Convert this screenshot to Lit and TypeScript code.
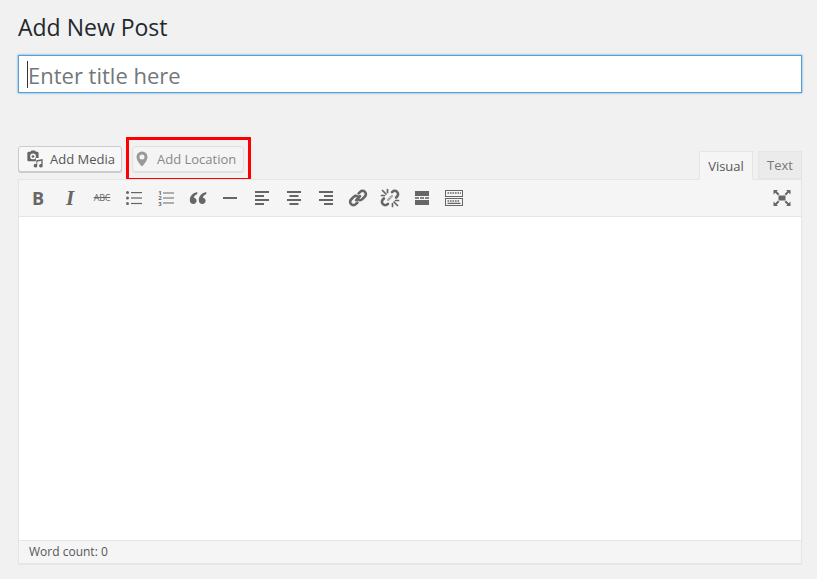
import { LitElement, html, css, svg } from "lit";
import { customElement } from "lit/decorators.js";

const ic = (body: unknown) => html`<svg class="ico" viewBox="0 0 20 20" width="20" height="20">${body}</svg>`;

const lines = (rows: [number, number, number][]) =>
  rows.map(([x, y, w]) => svg`<rect x=${x} y=${y} width=${w} height="2"></rect>`);

const linkBody = svg`<g fill="none" stroke="#666" stroke-width="2.6" stroke-linecap="round"><path d="M8.200 12.200 L12 8.200"></path><path d="M10.600 5.400 l1.600-1.600 a3.300 3.300 0 0 1 4.700 4.700 l-2.600 2.600 a3.300 3.300 0 0 1-4 .5"></path><path d="M9.400 14.600 l-1.600 1.600 a3.300 3.300 0 0 1-4.700-4.700 l2.600-2.600 a3.300 3.300 0 0 1 4-.5"></path></g>`;

const unlinkBody = svg`<g fill="none" stroke="#666" stroke-width="2.6" stroke-linecap="round"><path d="M12 4.200 l.4-.4 a3.300 3.300 0 0 1 4.700 4.700 l-1 1"></path><path d="M8 15.800 l-.4.4 a3.300 3.300 0 0 1-4.700-4.700 l1-1"></path></g><g stroke="#666" stroke-width="1.700" stroke-linecap="round"><path d="M2.500 2.500l3.500 3.500M7.500 1.500v3M1.500 7.500h3M17.500 17.500l-3.500-3.500M12.500 18.500v-3M18.500 12.500h-3"></path><path d="M8 12l4-4" stroke-width="2.400" stroke="#aaa"></path></g>`;

const icons = [
  html`<span class="glyph bold">B</span>`,
  html`<span class="glyph ital">I</span>`,
  html`<span class="glyph abc">ABC</span>`,
  ic(svg`<circle cx="3.500" cy="4.500" r="1.500"></circle><circle cx="3.500" cy="10" r="1.500"></circle><circle cx="3.500" cy="15.500" r="1.500"></circle><rect x="7" y="4" width="11" height="1.200"></rect><rect x="7" y="9.400" width="11" height="1.200"></rect><rect x="7" y="14.900" width="11" height="1.200"></rect>`),
  html`<span class="numlist"><span class="nums">123</span>${ic(svg`<rect x="7" y="4.500" width="11" height="1"></rect><rect x="7" y="9.500" width="11" height="1"></rect><rect x="7" y="14.500" width="11" height="1"></rect>`)}</span>`,
  ic(svg`<path d="M9.300 4 C5 5 1.800 7.800 1.800 12 c0 2.700 1.500 4 3.500 4 1.900 0 3.300-1.400 3.300-3.200 0-1.800-1.200-3-2.800-3.100 .3-1.500 1.700-2.900 3.500-3.700z"></path><path d="M18.300 4 C14 5 10.800 7.800 10.800 12 c0 2.700 1.500 4 3.500 4 1.900 0 3.300-1.400 3.300-3.200 0-1.800-1.200-3-2.800-3.100 .3-1.500 1.700-2.900 3.500-3.700z"></path>`),
  ic(svg`<rect x="3" y="9" width="14" height="2"></rect>`),
  ic(lines([[3, 3, 14], [3, 7, 9], [3, 11, 14], [3, 15, 9]])),
  ic(lines([[3, 3, 14], [5.5, 7, 9], [3, 11, 14], [5.5, 15, 9]])),
  ic(lines([[3, 3, 14], [8, 7, 9], [3, 11, 14], [8, 15, 9]])),
  ic(linkBody),
  ic(unlinkBody),
  ic(svg`<rect x="3" y="3" width="14" height="5"></rect><rect x="3" y="9.200" width="4" height="1.600"></rect><rect x="8" y="9.200" width="4" height="1.600"></rect><rect x="13" y="9.200" width="4" height="1.600"></rect><rect x="3" y="12" width="14" height="5"></rect>`),
  ic(svg`<path fill-rule="evenodd" d="M1 2h18v7H1zM2 3v5h16V3zM1 10h18v8H1zM2 11v6h16v-6z"></path><path d="M3.500 4.200h1.600v1.500H3.500zM6 4.200h1.600v1.500H6zM8.500 4.200h1.600v1.500H8.500zM11 4.200h1.600v1.500H11zM13.500 4.200h1.600v1.500h-1.600zM16 4.200h1v1.500h-1zM3.500 12.200h1.600v1.500H3.500zM6 12.200h1.600v1.500H6zM8.500 12.200h1.600v1.500H8.500zM11 12.200h1.600v1.500H11zM13.500 12.200h1.600v1.500h-1.600zM3.500 14.800h13v1.200h-13z"></path>`),
];

@customElement("app-root")
export class AppRoot extends LitElement {
  static styles = css`
    :host {
      display: block;
      height: 579px;
      overflow: hidden;
      background: #f1f1f1;
      font-family: "Open Sans", sans-serif;
      color: #444;
    }
    .wrap { padding: 0 15px 0 18px; display: flex; flex-direction: column; }
    h1 {
      margin: 0;
      height: 55px;
      padding-top: 11px;
      box-sizing: border-box;
      font-size: 23px;
      font-weight: 400;
      line-height: 32px;
      color: #23282d;
    }
    .title {
      height: 38px;
      box-sizing: border-box;
      display: flex;
      align-items: center;
      background: #fff;
      border: 1px solid #5b9dd9;
      box-shadow: 0 0 2px rgba(30, 140, 190, 0.8);
      padding-left: 8px;
      font-size: 22px;
      color: #72777c;
    }
    .title span:last-child { padding-top: 2px; }
    .caret { width: 1px; height: 27px; background: #32373c; flex: none; }
    .tools {
      height: 86px;
      box-sizing: border-box;
      display: flex;
      align-items: flex-end;
      justify-content: space-between;
    }
    .left { display: flex; align-items: center; height: 44px; margin-bottom: -2px; }
    .btn {
      height: 26px;
      box-sizing: border-box;
      display: flex;
      align-items: center;
      background: #f7f7f7;
      border: 1px solid #ccc;
      border-radius: 3px;
      box-shadow: 0 1px 0 #ccc;
      font-size: 13px;
      color: #555;
    }
    .media { width: 104px; padding-left: 7px; gap: 6px; margin-bottom: 1px; }
    .media svg { flex: none; }
    .red {
      width: 125px;
      height: 44px;
      box-sizing: border-box;
      margin-left: 4px;
      border: 3px solid #f00;
      padding: 6px 0 0 3px;
    }
    .loc {
      width: 112px;
      padding-left: 0;
      gap: 5px;
      background: #f4f4f4;
      border-color: #e0e0e0;
      box-shadow: 0 1px 0 #e0e0e0;
      color: #888;
    }
    .loc svg { margin-left: -1px; }
    .tabs { display: flex; align-items: flex-end; gap: 5px; }
    .tab {
      box-sizing: border-box;
      display: flex;
      align-items: center;
      justify-content: center;
      font-size: 13px;
      border: 1px solid #e5e5e5;
    }
    .tab.on { width: 54px; height: 29px; background: #f5f5f5; border-bottom-color: #f5f5f5; color: #555; margin-bottom: -1px; position: relative; z-index: 1; }
    .tab.off { width: 44px; height: 28px; background: #ebebeb; border-color: #e5e5e5; color: #777; }
    .editor {
      width: 784px;
      height: 385px;
      box-sizing: border-box;
      display: flex;
      flex-direction: column;
      border: 1px solid #e5e5e5;
      box-shadow: 0 1px 1px rgba(0, 0, 0, 0.04);
      background: #fff;
    }
    .bar {
      height: 37px;
      flex: none;
      box-sizing: border-box;
      display: flex;
      align-items: center;
      padding: 0 3px;
      background: #f5f5f5;
      border-bottom: 1px solid #e5e5e5;
    }
    .tb { width: 32px; height: 32px; display: flex; align-items: center; justify-content: center; flex: none; color: #555; }
    .spacer { flex: 1; }
    .ico { fill: #666; display: block; flex: none; }
    .glyph { display: block; line-height: 20px; color: #666; }
    .bold { font: 700 18px/20px "Open Sans", sans-serif; }
    .ital { font: italic 700 21px/20px "Liberation Serif", serif; }
    .abc { font: 400 9px/20px "Open Sans", sans-serif; text-decoration: line-through; letter-spacing: -0.2px; }
    .numlist { position: relative; display: block; width: 20px; height: 20px; }
    .nums {
      position: absolute;
      left: 1px;
      top: 1px;
      writing-mode: vertical-rl;
      text-orientation: upright;
      font-size: 6px;
      line-height: 6px;
      letter-spacing: -2.600px;
      font-weight: 700;
      color: #666;
    }
    .content { flex: 1; background: #fff; }
    .status {
      height: 23px;
      flex: none;
      box-sizing: border-box;
      display: flex;
      align-items: center;
      padding: 0 0 1px 10px;
      font-size: 12px;
      color: #555;
      background: #f5f5f5;
      border-top: 1px solid #e5e5e5;
    }
  `;

  render() {
    return html`
      <div class="wrap">
        <h1>Add New Post</h1>
        <div class="title"><span class="caret"></span><span>Enter title here</span></div>
        <div class="tools">
          <div class="left">
            <div class="btn media">
              <svg viewBox="0 0 20 20" width="18" height="18" fill="#666"><path fill-rule="evenodd" d="M3 2h2l1-1.500h4L11 2h1.500A1.500 1.500 0 0 1 14 3.500V9h-3v3.500H3A1.500 1.500 0 0 1 1.500 11V3.500A1.500 1.500 0 0 1 3 2zM7.800 4a3.200 3.200 0 1 0 0 6.400a3.200 3.200 0 0 0 0-6.400z"></path><circle cx="7.800" cy="7.200" r="1.500"></circle><path d="M12.500 17.500a2 2 0 1 1-1-1.700V11.500L18.500 10v7.500a2 2 0 1 1-1.500-1.900V12l-4.500 1z"></path></svg>
              <span>Add Media</span>
            </div>
            <div class="red">
              <div class="btn loc">
                <svg viewBox="0 0 20 20" width="20" height="20" fill="#999"><path fill-rule="evenodd" d="M10 2.500a5.500 5.500 0 0 0-5.500 5.500c0 3.500 4 8 5.500 9.500 1.500-1.500 5.500-6 5.500-9.500A5.500 5.500 0 0 0 10 2.500zM10 5.500a2.500 2.500 0 1 1 0 5a2.500 2.500 0 0 1 0-5z"></path></svg>
                <span>Add Location</span>
              </div>
            </div>
          </div>
          <div class="tabs">
            <div class="tab on">Visual</div>
            <div class="tab off">Text</div>
          </div>
        </div>
        <div class="editor">
          <div class="bar">
            ${icons.map((i) => html`<div class="tb">${i}</div>`)}
            <div class="spacer"></div>
            <div class="tb">
              ${ic(svg`<rect x="6.500" y="7.500" width="7" height="5"></rect><path d="M1.500 2h4.500L4.700 3.300 7.400 6 6 7.400 3.300 4.700 1.500 6.500zM18.500 2v4.500L16.700 4.700 14 7.400 12.600 6 15.300 3.300 14 2zM1.500 18v-4.500L3.300 15.300 6 12.600 7.400 14 4.700 16.700 6 18zM18.500 18h-4.500L15.300 16.700 12.600 14 14 12.600 16.700 15.300 18.500 13.500z"></path>`)}
            </div>
          </div>
          <div class="content"></div>
          <div class="status">Word count: 0</div>
        </div>
      </div>
    `;
  }
}
